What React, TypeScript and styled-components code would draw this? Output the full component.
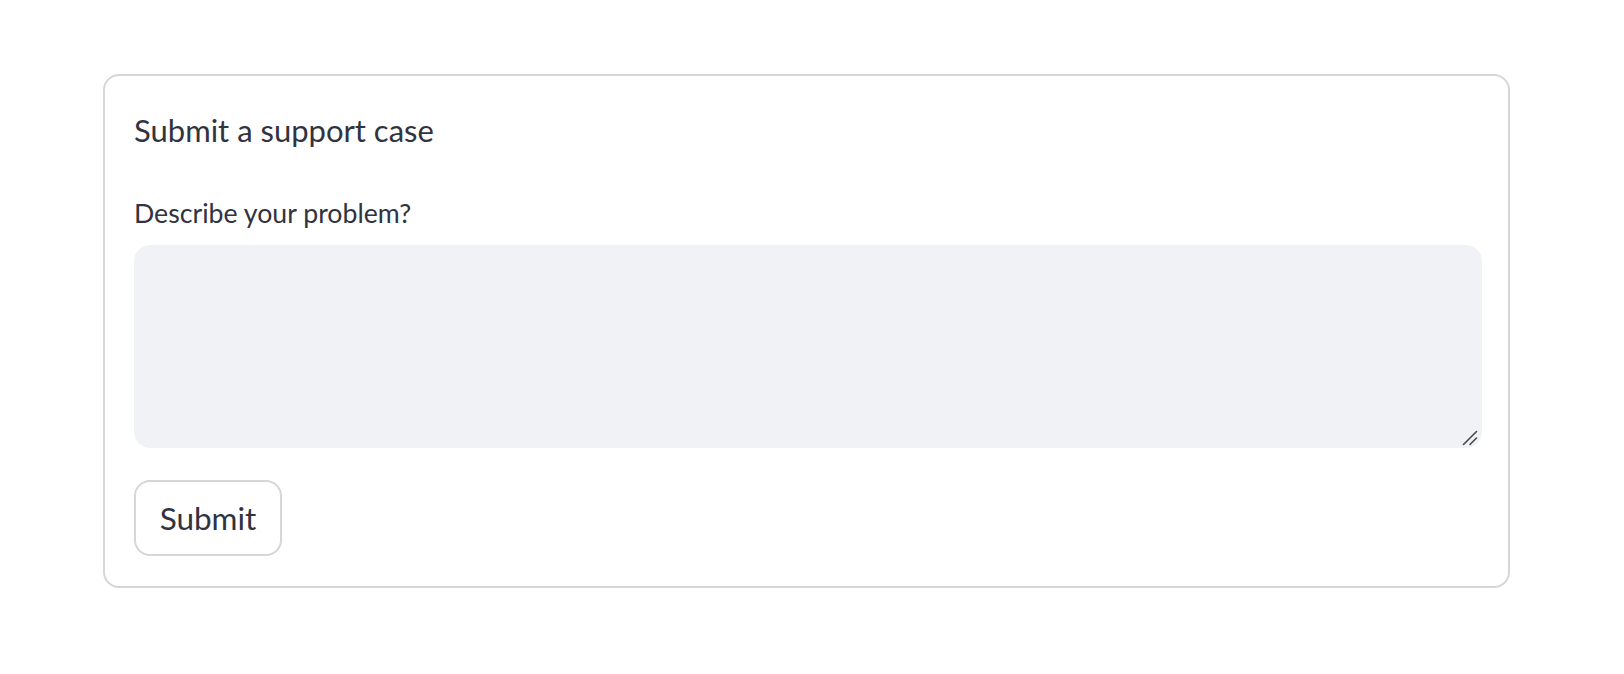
import React from "react";
import styled, { createGlobalStyle } from "styled-components";

const GlobalStyle = createGlobalStyle`
  html, body {
    margin: 0;
    padding: 0;
    background: #ffffff;
  }
  body {
    font-family: Lato, "Liberation Sans", sans-serif;
    color: #31333f;
  }
`;

const Page = styled.div`
  padding: 74px 0 0 103px;
`;

const Form = styled.form`
  box-sizing: border-box;
  width: 1407px;
  border: 2px solid #d6d6d9;
  border-radius: 16px;
  padding: 34px 26px 30px 29px;
  display: flex;
  flex-direction: column;
`;

const Title = styled.div`
  font-size: 31px;
  line-height: 40px;
  font-weight: 400;
  color: #31333f;
`;

const Label = styled.label`
  margin-top: 47px;
  font-size: 26.7px;
  line-height: 32px;
  color: #31333f;
`;

const Field = styled.div`
  position: relative;
  margin-top: 16px;
  height: 203px;
`;

const TextArea = styled.textarea`
  box-sizing: border-box;
  display: block;
  width: 100%;
  height: 100%;
  border: none;
  outline: none;
  border-radius: 16px;
  background: #f0f2f6;
  resize: none;
  padding: 16px 20px;
  font-family: inherit;
  font-size: 28px;
  color: #31333f;
`;

const Grip = styled.svg`
  position: absolute;
  right: 4px;
  bottom: 2px;
  width: 16px;
  height: 16px;
  pointer-events: none;
`;

const Button = styled.button`
  box-sizing: border-box;
  margin-top: 32px;
  align-self: flex-start;
  height: 76px;
  width: 148px;
  display: flex;
  align-items: center;
  justify-content: center;
  background: #ffffff;
  border: 2px solid #d6d6d9;
  border-radius: 16px;
  font-family: inherit;
  font-size: 31.5px;
  color: #31333f;
  cursor: pointer;
`;

export default function App() {
  return (
    <>
      <GlobalStyle />
      <Page>
        <Form onSubmit={(e) => e.preventDefault()}>
          <Title>Submit a support case</Title>
          <Label htmlFor="problem">Describe your problem?</Label>
          <Field>
            <TextArea id="problem" />
            <Grip viewBox="0 0 16 16" aria-hidden="true">
              <path
                d="M1.5 14.5 L14.5 1.5 M8 14.5 L14.5 8"
                stroke="#4a4a4a"
                strokeWidth="1.6"
                strokeLinecap="round"
                fill="none"
              />
            </Grip>
          </Field>
          <Button type="submit">Submit</Button>
        </Form>
      </Page>
    </>
  );
}
